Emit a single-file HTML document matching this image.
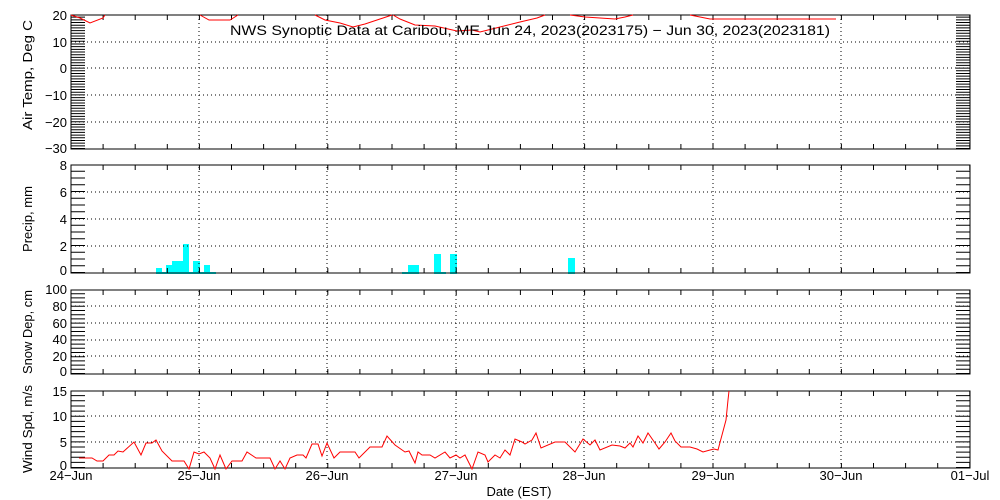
<!DOCTYPE html>
<html><head><meta charset="utf-8"><style>
html,body{margin:0;padding:0;background:#fff;}
svg{display:block;font-family:"Liberation Sans",sans-serif;}
</style></head><body>
<svg width="1000" height="500" viewBox="0 0 1000 500" xmlns="http://www.w3.org/2000/svg">
<rect width="1000" height="500" fill="#fff"/>
<g fill="#0ff">
<rect x="156" y="268" width="6" height="6"/><rect x="162" y="272" width="4" height="2"/>
<rect x="166" y="265" width="6" height="9"/><rect x="172" y="261" width="11" height="13"/>
<rect x="183" y="244" width="6" height="30"/><rect x="189" y="272" width="4" height="2"/>
<rect x="193" y="261" width="7" height="13"/><rect x="200" y="272" width="4" height="2"/>
<rect x="204" y="265" width="6" height="9"/><rect x="210" y="272" width="6" height="2"/>
<rect x="402" y="272" width="6" height="2"/><rect x="408" y="265" width="11" height="9"/>
<rect x="434" y="254" width="7" height="20"/><rect x="441" y="272" width="5" height="2"/>
<rect x="450" y="254" width="7" height="20"/><rect x="568" y="258" width="7" height="16"/>
</g>
<g stroke="#000" fill="none" stroke-width="1">
<rect x="71" y="15" width="899" height="134"/>
<rect x="71" y="165" width="899" height="108"/>
<rect x="71" y="290" width="899" height="84"/>
<rect x="71" y="391" width="899" height="77"/>
<g stroke-width="14">
<line x1="78" y1="149" x2="78" y2="15" stroke-dasharray="1 1.68"/>
<line x1="963" y1="149" x2="963" y2="15" stroke-dasharray="1 1.68"/>
<line x1="78" y1="273" x2="78" y2="165" stroke-dasharray="1 5.75"/>
<line x1="963" y1="273" x2="963" y2="165" stroke-dasharray="1 5.75"/>
<line x1="78" y1="374" x2="78" y2="290" stroke-dasharray="1 3.2"/>
<line x1="963" y1="374" x2="963" y2="290" stroke-dasharray="1 3.2"/>
<line x1="78" y1="468" x2="78" y2="391" stroke-dasharray="1 4.13"/>
<line x1="963" y1="468" x2="963" y2="391" stroke-dasharray="1 4.13"/>
</g>
<g stroke-width="5" stroke-dasharray="1 31.1">
<line x1="70.5" y1="17.5" x2="971" y2="17.5"/><line x1="70.5" y1="146.5" x2="971" y2="146.5"/>
<line x1="70.5" y1="167.5" x2="971" y2="167.5"/><line x1="70.5" y1="270.5" x2="971" y2="270.5"/>
<line x1="70.5" y1="292.5" x2="971" y2="292.5"/><line x1="70.5" y1="371.5" x2="971" y2="371.5"/>
<line x1="70.5" y1="393.5" x2="971" y2="393.5"/><line x1="70.5" y1="465.5" x2="971" y2="465.5"/>
</g>
<g stroke-dasharray="1 3">
<line x1="71" y1="42" x2="970" y2="42"/><line x1="71" y1="68" x2="970" y2="68"/>
<line x1="71" y1="95" x2="970" y2="95"/><line x1="71" y1="122" x2="970" y2="122"/>
<line x1="71" y1="246" x2="970" y2="246"/><line x1="71" y1="219" x2="970" y2="219"/><line x1="71" y1="192" x2="970" y2="192"/>
<line x1="71" y1="356" x2="970" y2="356"/><line x1="71" y1="340" x2="970" y2="340"/><line x1="71" y1="323" x2="970" y2="323"/><line x1="71" y1="306" x2="970" y2="306"/>
<line x1="71" y1="442" x2="970" y2="442"/><line x1="71" y1="416" x2="970" y2="416"/>
<line x1="199" y1="15" x2="199" y2="468"/><line x1="327" y1="15" x2="327" y2="468"/>
<line x1="456" y1="15" x2="456" y2="468"/><line x1="584" y1="15" x2="584" y2="468"/>
<line x1="713" y1="15" x2="713" y2="468"/><line x1="841" y1="15" x2="841" y2="468"/>
</g>
</g>
<g stroke="#fff" stroke-width="15"><line x1="0" y1="157" x2="1000" y2="157"/><line x1="0" y1="281.5" x2="1000" y2="281.5"/><line x1="0" y1="382.5" x2="1000" y2="382.5"/></g>
<g stroke="#000" fill="none"><line x1="71" y1="149" x2="970" y2="149"/><line x1="71" y1="165" x2="970" y2="165"/><line x1="71" y1="273" x2="970" y2="273"/><line x1="71" y1="290" x2="970" y2="290"/><line x1="71" y1="374" x2="970" y2="374"/><line x1="71" y1="391" x2="970" y2="391"/></g>
<g stroke="#f00" fill="none" stroke-width="1">
<polyline points="71,15 80,18 90,23 103,18 105,15"/>
<polyline points="200,15 209,20 230,20 238,15"/>
<polyline points="315,15 325,20 340,23 353,27 365,24 380,19 392,15"/>
<polyline points="393,15 400,19 415,25 435,26 457,31 472,30 480,32 500,27 520,22 537,18 545,15"/>
<polyline points="570,15 585,17 615,19 625,17 633,15"/>
<polyline points="690,15 700,17 710,19 836,19"/>
<polyline points="79,458 92,458 97,461 103,461 109,455 114,455 118,451 123,452 134,442 141,455 146,443 152,443 156,440 162,451 172,461 184,461 189,469 194,452 199,454 204,452 210,458 215,469 220,455 226,469 232,461 242,461 247,452 256,458 270,458 275,469 280,461 285,469 290,458 297,455 303,455 306,458 312,444 318,444 322,456 327,443 334,458 340,452 355,452 359,458 370,447 382,447 387,436 395,445 405,452 409,451 415,463 418,452 422,455 430,455 435,458 445,452 450,458 456,455 460,458 465,455 472,469 478,452 485,455 488,462 495,455 500,458 505,450 510,455 515,439 522,442 525,444 532,440 536,433 541,448 555,442 565,442 575,452 583,439 590,445 595,440 600,450 612,445 620,446 625,448 630,443 633,447 638,436 643,443 648,433 655,443 659,449 665,442 671,433 675,441 681,447 690,447 697,449 703,452 710,450 714,449 718,450 722,435 726,420 728,400 729,391"/>
</g>
<g font-size="13" fill="#000" text-anchor="end">
<text x="67" y="20">20</text><text x="67" y="47">10</text><text x="67" y="73">0</text><text x="67" y="100">−10</text><text x="67" y="127">−20</text><text x="67" y="153">−30</text>
<text x="67" y="170">8</text><text x="67" y="197">6</text><text x="67" y="224">4</text><text x="67" y="251">2</text><text x="67" y="275">0</text>
<text x="67" y="294">100</text><text x="67" y="311">80</text><text x="67" y="344">40</text><text x="67" y="328">60</text><text x="67" y="361">20</text><text x="67" y="376">0</text>
<text x="67" y="396">15</text><text x="67" y="421">10</text><text x="67" y="447">5</text><text x="67" y="470">0</text>
</g>
<g font-size="13" fill="#000" text-anchor="middle">
<text x="71" y="480">24−Jun</text><text x="199" y="480">25−Jun</text><text x="327" y="480">26−Jun</text><text x="456" y="480">27−Jun</text>
<text x="584" y="480">28−Jun</text><text x="713" y="480">29−Jun</text><text x="841" y="480">30−Jun</text><text x="970" y="480">01−Jul</text>
<text x="519" y="496">Date (EST)</text>
<text transform="translate(32,75) rotate(-90)" textLength="110" lengthAdjust="spacingAndGlyphs">Air Temp, Deg C</text>
<text transform="translate(32,219) rotate(-90)" textLength="66" lengthAdjust="spacingAndGlyphs">Precip, mm</text>
<text transform="translate(32,332) rotate(-90)" textLength="84" lengthAdjust="spacingAndGlyphs">Snow Dep, cm</text>
<text transform="translate(32,429) rotate(-90)" textLength="88" lengthAdjust="spacingAndGlyphs">Wind Spd, m/s</text>
</g>
<text x="230" y="35" font-size="14" textLength="600" lengthAdjust="spacingAndGlyphs">NWS Synoptic Data at Caribou, ME  Jun 24, 2023(2023175) − Jun 30, 2023(2023181)</text>
</svg>
</body></html>
